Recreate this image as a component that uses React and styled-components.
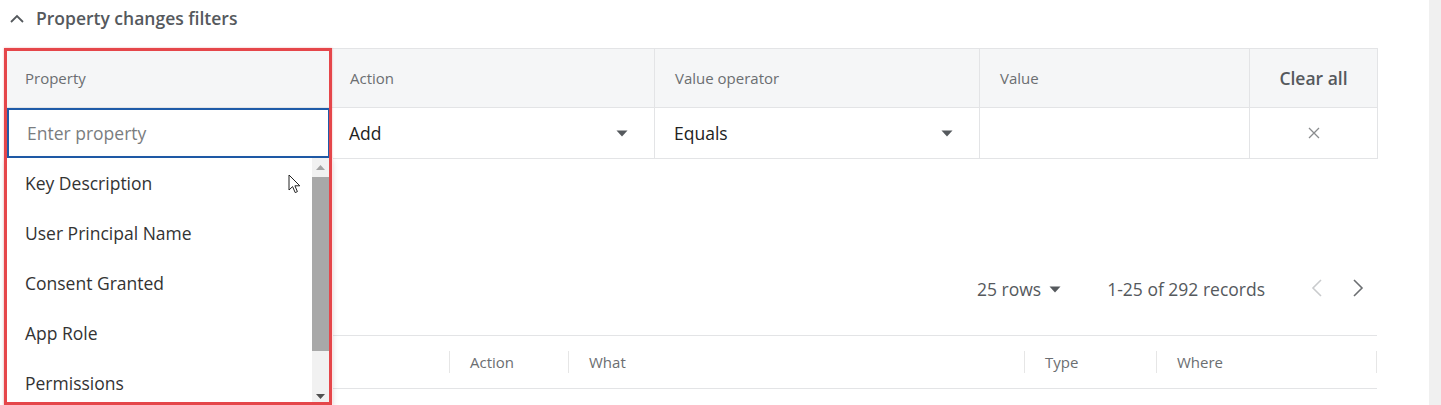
import React from 'react'
import styled, { createGlobalStyle } from 'styled-components'

const GlobalStyle = createGlobalStyle`
  html, body {
    margin: 0;
    padding: 0;
    background: #fff;
    font-family: 'Open Sans', 'Noto Sans', sans-serif;
    overflow: hidden;
  }
`

const Page = styled.div`
  display: flex;
  width: 1441px;
  height: 405px;
  overflow: hidden;
`

const Main = styled.div`
  flex: 1;
  padding: 0 51px 0 4px;
  display: flex;
  flex-direction: column;
`

const ScrollStrip = styled.div`
  width: 13px;
  background: #f0f0f0;
`

const TitleRow = styled.div`
  height: 48px;
  display: flex;
  align-items: flex-start;
  padding: 5px 0 0 6px;
  box-sizing: border-box;
  gap: 12px;
  color: #55595d;
  h2 {
    margin: 0;
    font-size: 17.5px;
    font-weight: 600;
    line-height: 26px;
  }
  svg {
    margin-top: 9px;
  }
`

const FilterTable = styled.div`
  display: flex;
  border-top: 1px solid #e3e4e6;
  border-left: 1px solid #e3e4e6;
`

const Column = styled.div`
  position: relative;
  width: ${p => p.$w}px;
  flex: none;
  display: flex;
  flex-direction: column;
  border-right: 1px solid #e3e4e6;
  box-sizing: border-box;
`

const HeadCell = styled.div`
  height: 58px;
  background: #f5f6f7;
  border-bottom: 1px solid #e3e4e6;
  display: flex;
  align-items: center;
  justify-content: ${p => (p.$center ? 'center' : 'flex-start')};
  padding-left: ${p => (p.$center ? 0 : 20)}px;
  font-size: ${p => (p.$strong ? 17.5 : 15)}px;
  font-weight: ${p => (p.$strong ? 600 : 400)};
  color: ${p => (p.$strong ? '#55595d' : '#6b6e71')};
`

const BodyCell = styled.div`
  height: 50px;
  border-bottom: 1px solid #e3e4e6;
  display: flex;
  align-items: center;
  justify-content: ${p => (p.$center ? 'center' : 'space-between')};
  padding: 0 ${p => (p.$center ? 0 : 26)}px 0 ${p => (p.$center ? 0 : 19)}px;
  font-size: 17.5px;
  color: #222;
`

const PropertyInput = styled.input`
  height: 50px;
  box-sizing: border-box;
  border: 2px solid #1f5ba8;
  border-right-width: 3px;
  margin: 0 -2px 0 2px;
  padding: 0 0 0 18px;
  font-family: 'Open Sans', sans-serif;
  font-size: 17.5px;
  color: #222;
  outline: none;
  &::placeholder {
    color: #7a7d80;
  }
`

const Dropdown = styled.div`
  position: absolute;
  top: 109px;
  left: 0;
  width: 328px;
  height: 248px;
  background: #fff;
  display: flex;
  z-index: 2;
  box-shadow: 0 2px 6px rgba(0, 0, 0, 0.12);
`

const OptionList = styled.ul`
  flex: 1;
  list-style: none;
  margin: 0;
  padding: 0;
  overflow: hidden;
`

const Option = styled.li`
  height: 50px;
  display: flex;
  align-items: center;
  padding-left: 20px;
  font-size: 17.5px;
  color: #333;
`

const ScrollTrack = styled.div`
  width: 17px;
  margin-right: 4px;
  background: #f1f1f1;
  display: flex;
  flex-direction: column;
  align-items: center;
`

const ScrollArrow = styled.div`
  height: 19px;
  display: flex;
  align-items: center;
  justify-content: center;
`

const ScrollThumb = styled.div`
  width: 17px;
  height: 174px;
  background: #a8a8a8;
`

const Highlight = styled.div`
  position: absolute;
  left: -1px;
  top: -1px;
  width: 328px;
  height: 357px;
  border: 3px solid #e5464a;
  box-sizing: border-box;
  box-shadow: 0 0 2px rgba(229, 70, 74, 0.4);
  pointer-events: none;
  z-index: 3;
`

const Cursor = styled.svg`
  position: absolute;
  left: 283px;
  top: 16px;
`

const Pager = styled.div`
  height: 176px;
  display: flex;
  align-items: flex-end;
  justify-content: flex-end;
  padding: 0 14px 34px 0;
  box-sizing: border-box;
  font-size: 17.5px;
  color: #55595d;
`

const RowsSelect = styled.div`
  display: flex;
  align-items: center;
  gap: 8px;
  margin-right: 46px;
`

const Records = styled.span`
  margin-right: 46px;
`

const NavButton = styled.div`
  display: flex;
  align-items: center;
  height: 26px;
  margin-left: ${p => (p.$first ? 0 : 29)}px;
`

const ResultHead = styled.div`
  display: flex;
  height: 52px;
  border-top: 1px solid #e3e4e6;
  border-bottom: 1px solid #e3e4e6;
  width: 1373px;
`

const ResultCol = styled.div`
  width: ${p => p.$w}px;
  flex: none;
  display: flex;
  align-items: center;
  padding-left: 20px;
  box-sizing: border-box;
  font-size: 15px;
  color: #6b6e71;
  border-left: ${p => (p.$first ? 'none' : '1px solid #e6e6e6')};
  margin: 15px 0;
`

const ResultEnd = styled.div`
  width: 1px;
  background: #e6e6e6;
  margin: 15px 0;
`

const Caret = () => (
  <svg width="12" height="7" viewBox="0 0 12 7">
    <path d="M0.5 0.5 H11.5 L6 6.5 Z" fill="#55595d" />
  </svg>
)

const columns = [
  { key: 'action', label: 'Action', value: 'Add', w: 325, caret: true },
  { key: 'op', label: 'Value operator', value: 'Equals', w: 325, caret: true },
  { key: 'value', label: 'Value', value: '', w: 270 },
]

const options = ['Key Description', 'User Principal Name', 'Consent Granted', 'App Role', 'Permissions']

const resultCols = [
  { label: '', w: 445 },
  { label: 'Action', w: 119 },
  { label: 'What', w: 456 },
  { label: 'Type', w: 132 },
  { label: 'Where', w: 220 },
]

export default function App() {
  return (
    <Page>
      <GlobalStyle />
      <Main>
        <TitleRow>
          <svg width="14" height="9" viewBox="0 0 14 9">
            <polyline points="1,8 7,2 13,8" fill="none" stroke="#55595d" strokeWidth="1.8" />
          </svg>
          <h2>Property changes filters</h2>
        </TitleRow>

        <FilterTable>
          <Column $w={325}>
            <HeadCell>Property</HeadCell>
            <PropertyInput placeholder="Enter property" />
            <Dropdown>
              <OptionList>
                {options.map(o => (
                  <Option key={o}>{o}</Option>
                ))}
              </OptionList>
              <ScrollTrack>
                <ScrollArrow>
                  <svg width="9" height="5" viewBox="0 0 9 5">
                    <path d="M0 5 L4.5 0 L9 5 Z" fill="#a3a3a3" />
                  </svg>
                </ScrollArrow>
                <ScrollThumb />
                <div style={{ flex: 1 }} />
                <ScrollArrow>
                  <svg width="9" height="5" viewBox="0 0 9 5">
                    <path d="M0 0 L9 0 L4.5 5 Z" fill="#505050" />
                  </svg>
                </ScrollArrow>
              </ScrollTrack>
              <Cursor width="13" height="20" viewBox="0 0 13 20">
                <path d="M1 1 V16 L4.6 12.6 L7.2 18.6 L9.4 17.6 L6.9 11.8 L11.8 11.8 Z" fill="#fff" stroke="#222" strokeWidth="1" strokeLinejoin="round" />
              </Cursor>
            </Dropdown>
            <Highlight />
          </Column>
          {columns.map(c => (
            <Column key={c.key} $w={c.w}>
              <HeadCell>{c.label}</HeadCell>
              <BodyCell>
                <span>{c.value}</span>
                {c.caret && <Caret />}
              </BodyCell>
            </Column>
          ))}
          <Column $w={128}>
            <HeadCell $center $strong>Clear all</HeadCell>
            <BodyCell $center>
              <svg width="12" height="12" viewBox="0 0 12 12">
                <path d="M1 1 L11 11 M11 1 L1 11" stroke="#8a8c8e" strokeWidth="1.3" />
              </svg>
            </BodyCell>
          </Column>
        </FilterTable>

        <Pager>
          <RowsSelect>
            <span>25 rows</span>
            <Caret />
          </RowsSelect>
          <Records>1-25 of 292 records</Records>
          <NavButton $first>
            <svg width="12" height="18" viewBox="0 0 12 18">
              <polyline points="10,1 2,9 10,17" fill="none" stroke="#c9cbcd" strokeWidth="1.6" />
            </svg>
          </NavButton>
          <NavButton>
            <svg width="12" height="18" viewBox="0 0 12 18">
              <polyline points="2,1 10,9 2,17" fill="none" stroke="#6b6e71" strokeWidth="1.6" />
            </svg>
          </NavButton>
        </Pager>

        <ResultHead>
          {resultCols.map((c, i) => (
            <ResultCol key={i} $w={c.w} $first={i === 0}>
              {c.label}
            </ResultCol>
          ))}
          <ResultEnd />
        </ResultHead>
      </Main>
      <ScrollStrip />
    </Page>
  )
}
